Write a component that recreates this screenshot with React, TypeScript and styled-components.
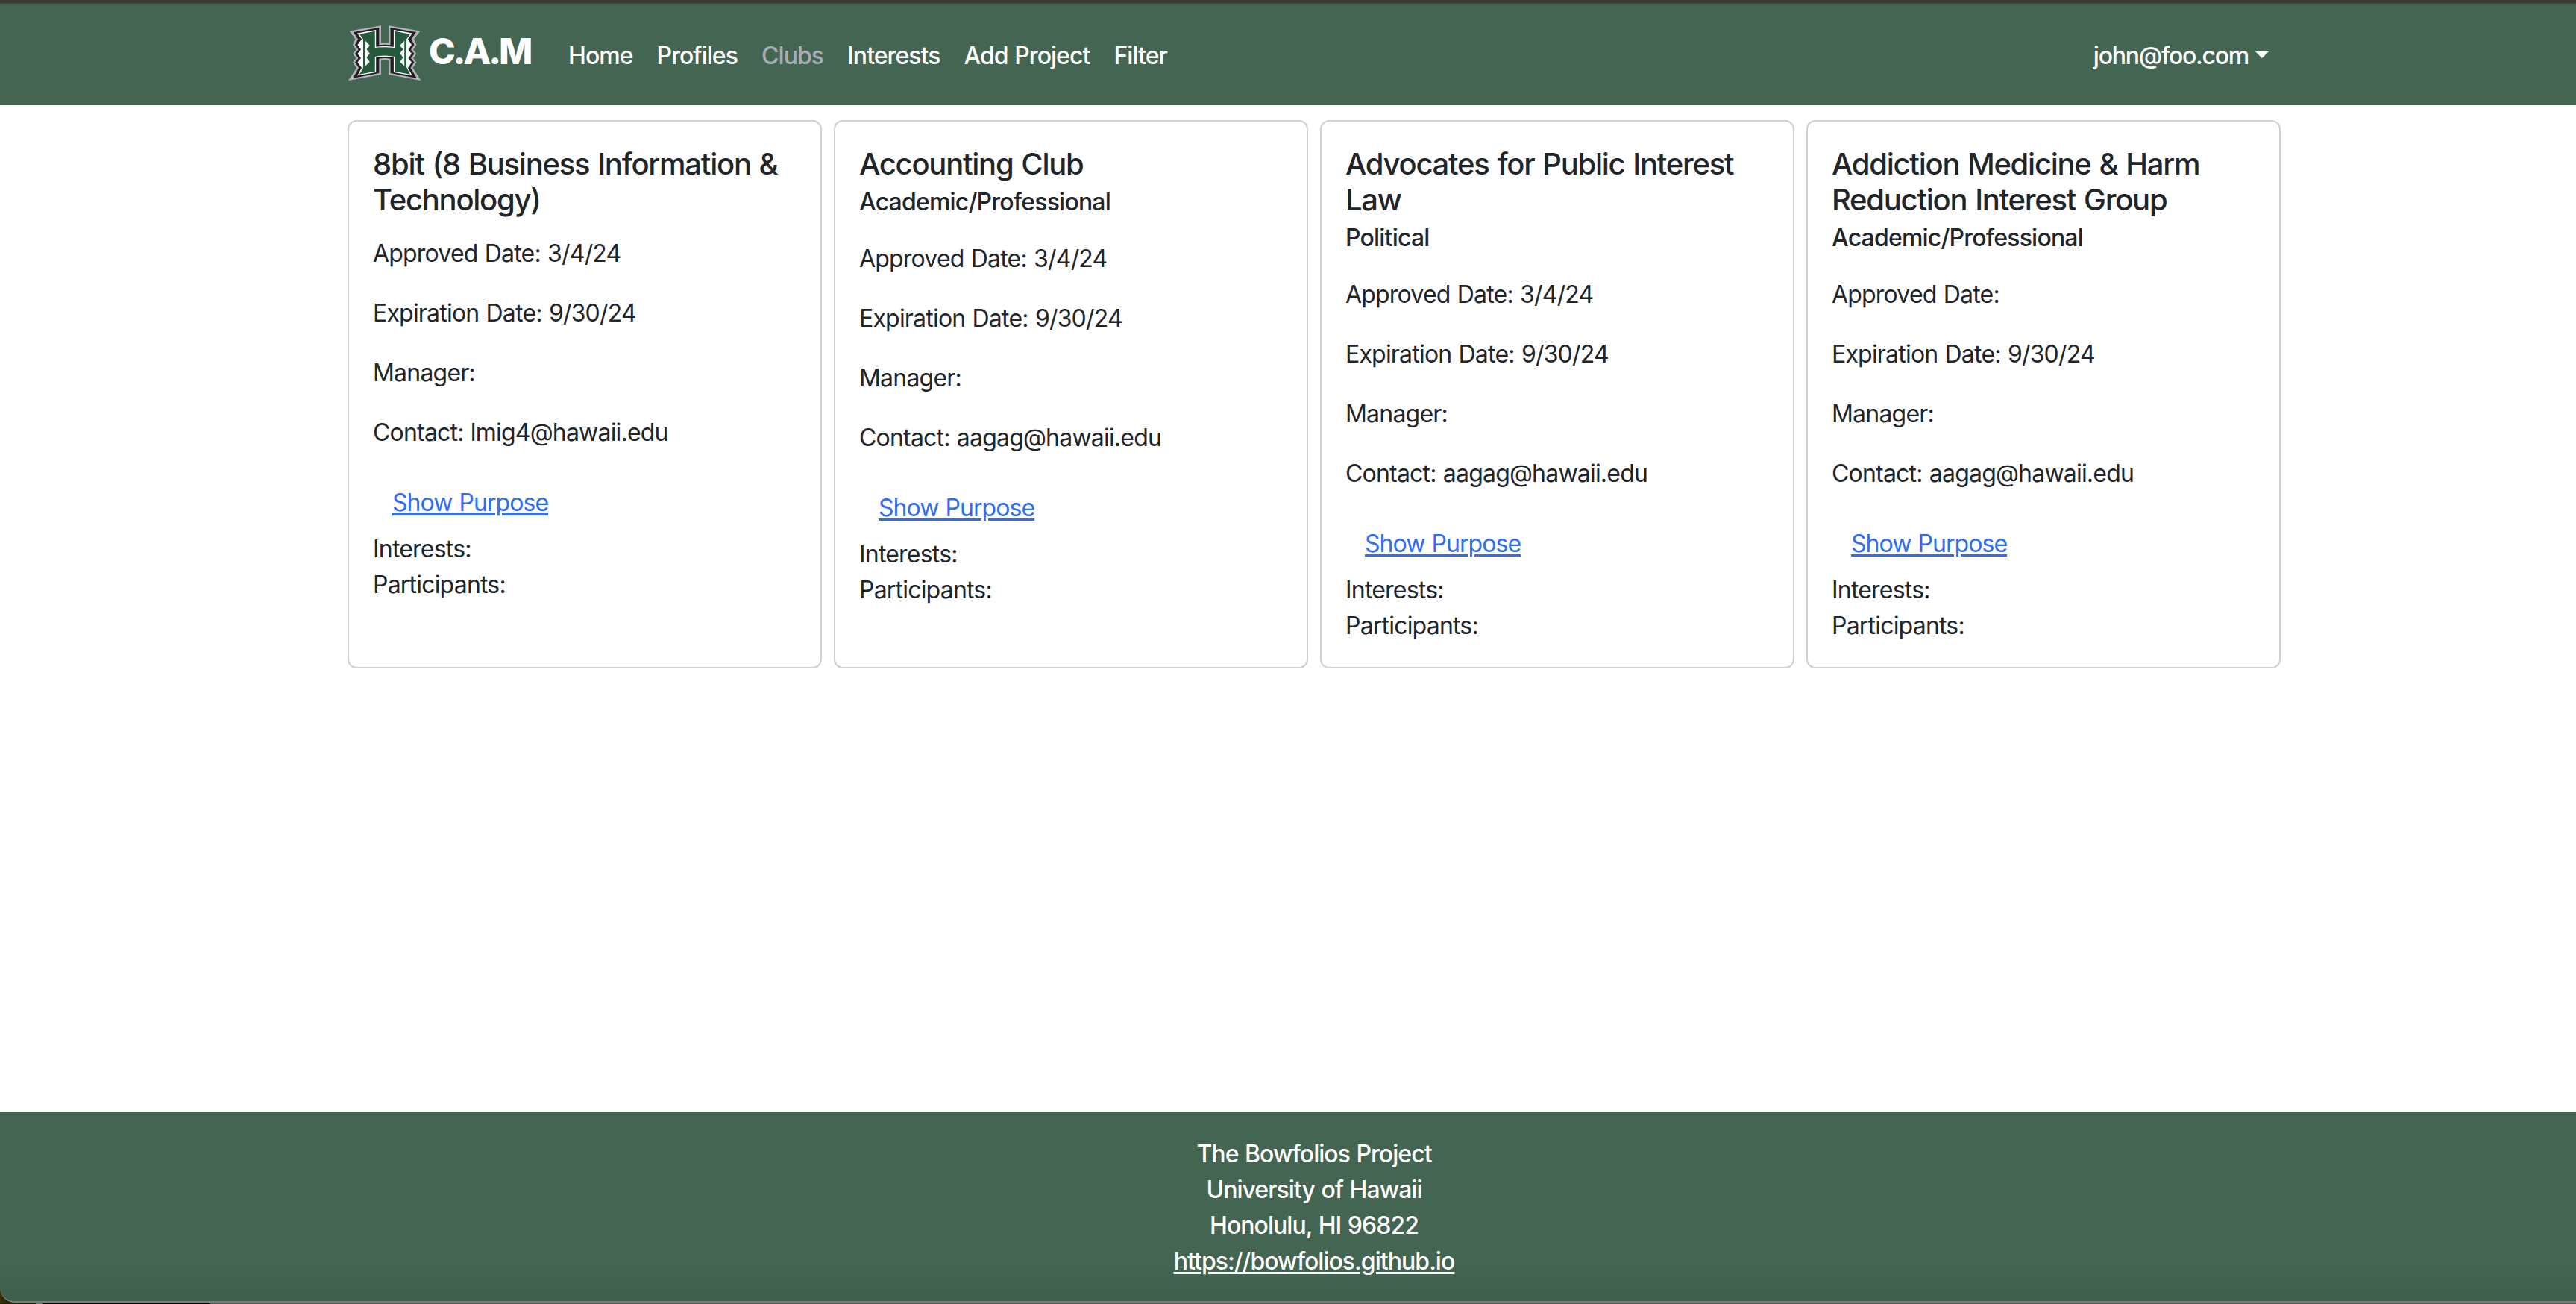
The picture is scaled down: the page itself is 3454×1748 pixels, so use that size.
import React from "react";
import styled, { createGlobalStyle } from "styled-components";

const GlobalStyle = createGlobalStyle`
  *, *::before, *::after { box-sizing: border-box; }
  html, body { margin: 0; padding: 0; background: #fff; overflow: hidden; }
  body {
    font-family: Inter, "Liberation Sans", sans-serif;
    font-size: 32px;
    line-height: 48px;
    letter-spacing: -0.8px;
    word-spacing: 1px;
    color: #212529;
  }
`;

const Page = styled.div`
  width: 3454px;
  height: 1748px;
  display: flex;
  flex-direction: column;
  overflow: hidden;
  background: #fff;
`;

const WindowEdge = styled.div`
  flex: none;
  height: 6px;
  background: #353c2c;
  border-bottom: 2px solid #49494a;
`;

const Navbar = styled.header`
  flex: none;
  height: 135px;
  background: #436552;
  color: #fff;
  padding: 0 396px 0 466px;
  display: flex;
  align-items: flex-start;
`;

const Brand = styled.a`
  display: flex;
  align-items: flex-start;
  width: 280px;
`;

const LogoSvg = styled.svg`
  display: block;
  width: 100px;
  height: 78px;
  margin-top: 26px;
`;

const BrandName = styled.span`
  margin: 34px 0 0 9px;
  font-size: 48px;
  line-height: 58px;
  font-weight: 800;
  letter-spacing: -3.1px;
`;

const NavLinks = styled.nav`
  display: flex;
  flex: 1;
  margin-top: 45px;
`;

const NavLink = styled.a<{ $active?: boolean }>`
  padding: 0 16px;
  white-space: nowrap;
  font-weight: 450;
  letter-spacing: -0.95px;
  color: ${(p) => (p.$active ? "#a9acb6" : "#fff")};
`;

const UserMenu = styled(NavLink)`
  display: flex;
  margin-top: 45px;
  letter-spacing: -1.25px;
`;

const Caret = styled.span`
  margin: 18px 0 0 9px;
  width: 0;
  height: 0;
  border-top: 9.6px solid #fff;
  border-left: 9.6px solid transparent;
  border-right: 9.6px solid transparent;
`;

const Main = styled.main`
  flex: 1;
  padding: 20px 0 0 466px;
`;

const CardGrid = styled.section`
  display: grid;
  grid-template-columns: repeat(4, 636px);
  column-gap: 16px;
`;

const Card = styled.article`
  border: 2px solid #d0d0d0;
  border-radius: 12px;
  padding: 33px 32px 30px;
  height: 735px;
`;

const CardTitle = styled.h5`
  margin: 0;
  font-size: 40px;
  line-height: 48px;
  font-weight: 550;
  letter-spacing: -1.26px;
  word-spacing: 1.5px;
`;

const CardSubtitle = styled.h6`
  margin: 8px 0 9px;
  font-size: 32px;
  line-height: 38.4px;
  font-weight: 550;
`;

const Details = styled.div`
  padding-top: 24px;
`;

const Detail = styled.p`
  margin: 0 0 32px;
`;

const PurposeButton = styled.button`
  display: block;
  border: 2px solid transparent;
  background: none;
  padding: 12px 24px;
  font: inherit;
  letter-spacing: -0.95px;
  word-spacing: 1px;
  color: #316cf4;
  text-decoration: underline;
  text-decoration-thickness: 3px;
  text-underline-offset: 3px;
`;

const Footer = styled.footer`
  flex: none;
  height: 256px;
  padding: 33px 0 0 70px;
  display: flex;
  flex-direction: column;
  align-items: center;
  color: #fff;
  font-weight: 450;
  letter-spacing: -0.97px;
  background: linear-gradient(#436552 0, #436552 205px, #3e5f4d 254px);
  border-bottom: 2px solid #6b8474;
  border-bottom-left-radius: 20px;
`;

const FooterLink = styled.a`
  text-decoration: underline;
  text-decoration-thickness: 3px;
  text-underline-offset: 3px;
`;

const Backdrop = styled.div`
  flex: none;
  background: linear-gradient(90deg, #3a3208 0, #14100a 22px, #000 60px);
`;

const DesktopEdge = styled.div`
  height: 2px;
  padding-top: 1px;
  &::after {
    content: "";
    display: block;
    height: 1px;
    background: linear-gradient(90deg, #241f08 48px, #777 48px, #777 57px, #000 57px, #000 282px, #5b5656 282px);
  }
`;

const Logo = () => (
  <LogoSvg viewBox="0 0 100 78" aria-hidden="true">
    <g transform="translate(1 2)">
      <path fill="#b1b4b6" d="M1.5 7.5 44 0.3V23.3H54V0.3L96.5 7.5 88 18.5 91.5 26 87 32.5 91.5 38 87 44 91.5 49.5 86.5 57 97.5 74 54 66V46.5Q49 45.5 44 46.5V66L0 74 11 57 6 49.5 10.5 44 6 38 10.5 32.5 6 26 9.5 18.5Z" />
      <path fill="#231f20" d="M7 9 41.3 3V26.3Q49 25.3 56.5 26.3V3L91 9 84.5 18.5 88.5 26 84 32.5 88.5 38 84 44 88.5 49.5 83.5 57 92 71 56.5 64V44.8Q49 43.2 41.3 44.8V64L6 71 14 57 9 49.5 13.5 44 9 38 13.5 32.5 9 26 13 18.5Z" />
      <path fill="#fff" d="M12 10.5 37.2 6V28.8Q49 27.2 60.9 28.8V6L86 10.5 80 18.5 85 26 80.5 32.5 85 38 80.5 44 85 49.5 80 57 86 67.5 60.9 63V43.2Q49 40.6 37.2 43.2V63L12 67.5 18 57 12.5 49.5 17 44 12.5 38 17 32.5 12.5 26 18 18.5Z" />
      <path fill="#24593c" d="M15 11.8 35.8 7.7V30Q49 28.4 62.2 30V7.7L83 11.8 78 18.5V56L83 65.8 62.2 61.7V42Q49 39 35.8 42V61.7L15 65.8 20 57V18.5Z" />
      <path fill="#fff" d="M22.8 20.5 28.8 27 24.5 32 28.8 37.5 24.5 43 28.8 49 22.8 54.500ZM75.200 20.500 69.200 27 73.500 32 69.200 37.500 73.500 43 69.200 49 75.200 54.500Z" />
    </g>
  </LogoSvg>
);

interface Club {
  name: string;
  category?: string;
  approved: string;
  expires: string;
  contact: string;
}

const clubs: Club[] = [
  { name: "8bit (8 Business Information & Technology)", approved: "3/4/24", expires: "9/30/24", contact: "lmig4@hawaii.edu" },
  { name: "Accounting Club", category: "Academic/Professional", approved: "3/4/24", expires: "9/30/24", contact: "aagag@hawaii.edu" },
  { name: "Advocates for Public Interest Law", category: "Political", approved: "3/4/24", expires: "9/30/24", contact: "aagag@hawaii.edu" },
  { name: "Addiction Medicine & Harm Reduction Interest Group", category: "Academic/Professional", approved: "", expires: "9/30/24", contact: "aagag@hawaii.edu" },
];

const links = ["Home", "Profiles", "Clubs", "Interests", "Add Project", "Filter"];

const ClubCard = ({ club }: { club: Club }) => (
  <Card>
    <CardTitle>{club.name}</CardTitle>
    {club.category && <CardSubtitle>{club.category}</CardSubtitle>}
    <Details>
      <Detail>Approved Date: {club.approved}</Detail>
      <Detail>Expiration Date: {club.expires}</Detail>
      <Detail>Manager:</Detail>
      <Detail>Contact: {club.contact}</Detail>
    </Details>
    <PurposeButton>Show Purpose</PurposeButton>
    <div>Interests:</div>
    <div>Participants:</div>
  </Card>
);

export default function App() {
  return (
    <>
      <GlobalStyle />
      <Page>
        <WindowEdge />
        <Navbar>
          <Brand>
            <Logo />
            <BrandName>C.A.M</BrandName>
          </Brand>
          <NavLinks>
            {links.map((l) => (
              <NavLink key={l} $active={l === "Clubs"}>{l}</NavLink>
            ))}
          </NavLinks>
          <UserMenu>
            john@foo.com
            <Caret />
          </UserMenu>
        </Navbar>
        <Main>
          <CardGrid>
            {clubs.map((c) => (
              <ClubCard key={c.name} club={c} />
            ))}
          </CardGrid>
        </Main>
        <Backdrop>
          <Footer>
            <div>The Bowfolios Project</div>
            <div>University of Hawaii</div>
            <div>Honolulu, HI 96822</div>
            <FooterLink>https://bowfolios.github.io</FooterLink>
          </Footer>
          <DesktopEdge />
        </Backdrop>
      </Page>
    </>
  );
}
